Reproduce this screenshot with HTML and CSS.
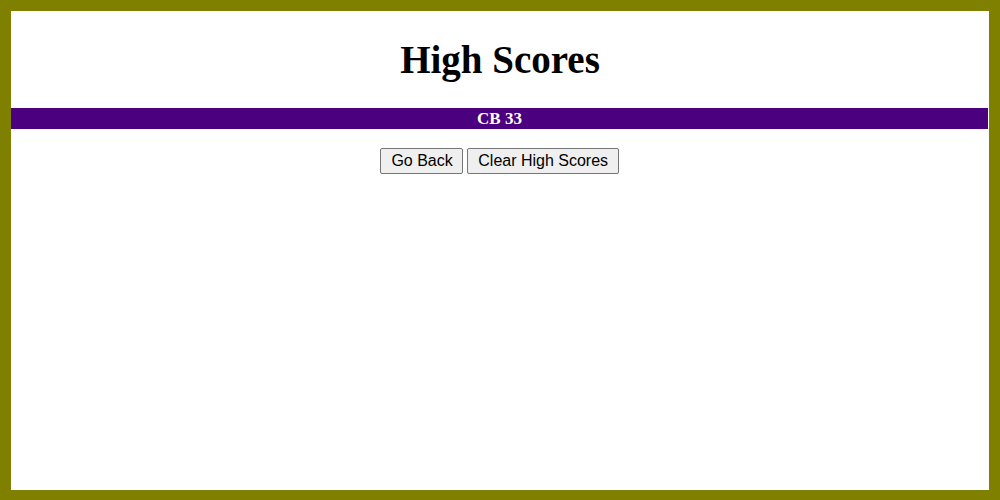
FILE: index.html
```html
<!DOCTYPE html>
<html>
<head>
<meta charset="utf-8">
<title>High Scores</title>
<link rel="stylesheet" href="styles.css">
</head>
<body>
<main class="page">
  <h1 class="title">High Scores</h1>
  <ol class="scores">
    <li class="score">CB 33</li>
  </ol>
  <div class="actions">
    <button class="btn">Go Back</button>
    <button class="btn">Clear High Scores</button>
  </div>
</main>
</body>
</html>
```
FILE: styles.css
```css
html, body {
  margin: 0;
  padding: 0;
}
body {
  font-family: "Liberation Serif", "Times New Roman", serif;
  background: #fff;
}
.page {
  box-sizing: border-box;
  height: 500px;
  border: 11px solid #808000;
  border-bottom-width: 10px;
  text-align: center;
}
.title {
  margin: 27px 0 26px;
  font-size: 39px;
  line-height: 44px;
  font-weight: bold;
  color: #000;
}
.scores {
  list-style: none;
  margin: 0 1px 0 0;
  padding: 0;
}
.score {
  background: #4b0080;
  color: #fff;
  font-weight: bold;
  font-size: 17px;
  line-height: 21px;
  height: 21px;
}
.actions {
  margin-top: 19px;
  font-size: 16px;
  padding-right: 1px;
}
.btn {
  font-family: "Liberation Sans", Arial, sans-serif;
  font-size: 16px;
  line-height: 20px;
  padding: 2px 9.5px 2px 10px;
  border: 1px solid #767676;
  border-radius: 2px;
  background: #efefef;
  color: #000;
  margin: 0;
}
```
